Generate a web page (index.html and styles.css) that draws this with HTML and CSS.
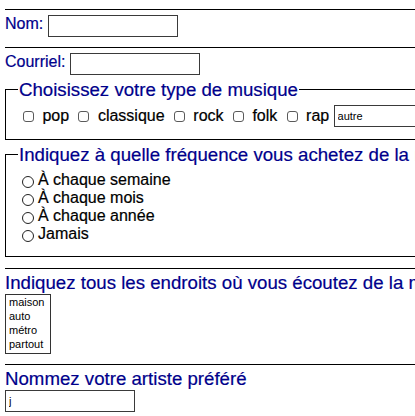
FILE: index.html
```html
<!DOCTYPE html>
<html lang="fr">
<head>
<meta charset="utf-8">
<title>Sondage musique</title>
<link rel="stylesheet" href="styles.css">
</head>
<body>
<form class="survey">
  <div class="section">
    <div class="line">
      <label class="label" for="nom">Nom:</label>
      <input class="field" id="nom" type="text">
    </div>
  </div>
  <div class="section section--form">
    <div class="line">
      <label class="label" for="courriel">Courriel:</label>
      <input class="field" id="courriel" type="text">
    </div>
    <fieldset class="group group--types">
      <legend class="legend">Choisissez votre type de musique</legend>
      <div class="choices">
        <label class="choice"><input type="checkbox" class="cb">pop</label>
        <label class="choice"><input type="checkbox" class="cb">classique</label>
        <label class="choice"><input type="checkbox" class="cb">rock</label>
        <label class="choice"><input type="checkbox" class="cb">folk</label>
        <label class="choice"><input type="checkbox" class="cb">rap</label>
        <input class="field" type="text" value="autre">
      </div>
    </fieldset>
    <fieldset class="group group--freq">
      <legend class="legend">Indiquez à quelle fréquence vous achetez de la musique</legend>
      <label class="freq"><input type="radio" name="freq" class="rd">À chaque semaine</label>
      <label class="freq"><input type="radio" name="freq" class="rd">À chaque mois</label>
      <label class="freq"><input type="radio" name="freq" class="rd">À chaque année</label>
      <label class="freq"><input type="radio" name="freq" class="rd">Jamais</label>
    </fieldset>
  </div>
  <div class="section section--question">
    <p class="question">Indiquez tous les endroits où vous écoutez de la musique</p>
    <select class="places" multiple size="4">
      <option>maison</option>
      <option>auto</option>
      <option>métro</option>
      <option>partout</option>
    </select>
  </div>
  <div class="section section--question section--last">
    <p class="question">Nommez votre artiste préféré</p>
    <input class="field" type="text" value="j">
  </div>
</form>
</body>
</html>
```

FILE: styles.css
```css
html, body {
  overflow: hidden;
}

body {
  margin: 0;
  padding: 9px 0 0 5px;
  font-family: "Liberation Sans", Arial, Helvetica, sans-serif;
  font-size: 16px;
  color: #000;
  background: #fff;
  -webkit-text-stroke: 0.2px currentColor;
}

.survey {
  width: 600px;
}

.section {
  border-top: 1px solid #000;
  padding: 5px 0 10px;
}

.section--form {
  padding-bottom: 11px;
}

.section--question {
  padding-top: 3px;
}

.section--last {
  padding-bottom: 0;
}

.line {
  display: flex;
  align-items: flex-start;
  gap: 5px;
}

.label {
  color: #00008b;
}

.field {
  box-sizing: border-box;
  display: block;
  width: 130px;
  height: 22px;
  margin: 0;
  padding: 0 3px;
  border: 1px solid #3a3a3a;
  border-radius: 0;
  background: #fff;
  color: #000;
  font-family: "Liberation Sans", Arial, Helvetica, sans-serif;
  font-size: 11px;
  outline: none;
  -webkit-text-stroke: 0;
}

.group {
  margin: 4px 0 0;
  padding: 5px 12px 12px;
  border: 1px solid #000;
  min-width: 0;
}

.group--freq {
  padding: 6px 12px 13px;
}

.legend {
  padding: 0 1px;
  font-size: 18.67px;
  line-height: 21px;
  color: #00008b;
  white-space: nowrap;
}

.choices {
  display: flex;
  align-items: center;
  height: 22px;
  white-space: nowrap;
}

.choice {
  display: flex;
  align-items: center;
  margin-right: 4.4px;
}

.cb {
  appearance: none;
  -webkit-appearance: none;
  box-sizing: border-box;
  width: 11px;
  height: 11px;
  margin: 0 8.4px 0 5px;
  border: 1px solid #5a5a5a;
  border-radius: 3px;
  background: #fff;
  flex: none;
}

.freq {
  display: flex;
  align-items: flex-start;
  height: 18px;
  line-height: 18px;
  white-space: nowrap;
}

.rd {
  appearance: none;
  -webkit-appearance: none;
  box-sizing: border-box;
  width: 12px;
  height: 12px;
  margin: 5px 4px 0 4px;
  border: 1px solid #222;
  border-radius: 50%;
  background: #fff;
  flex: none;
}

.question {
  margin: 0 0 1px;
  font-size: 18.67px;
  line-height: 21px;
  color: #00008b;
  white-space: nowrap;
}

.places {
  display: block;
  box-sizing: border-box;
  width: 46px;
  height: 60px;
  margin: 0;
  padding: 1px 0;
  border: 1px solid #333;
  border-radius: 0;
  background: #fff;
  color: #000;
  font-family: "Liberation Sans", Arial, Helvetica, sans-serif;
  font-size: 11px;
  overflow: hidden;
  outline: none;
  -webkit-text-stroke: 0;
}

.places option {
  padding: 0 3px;
  line-height: 14px;
  min-height: 14px;
}
```
